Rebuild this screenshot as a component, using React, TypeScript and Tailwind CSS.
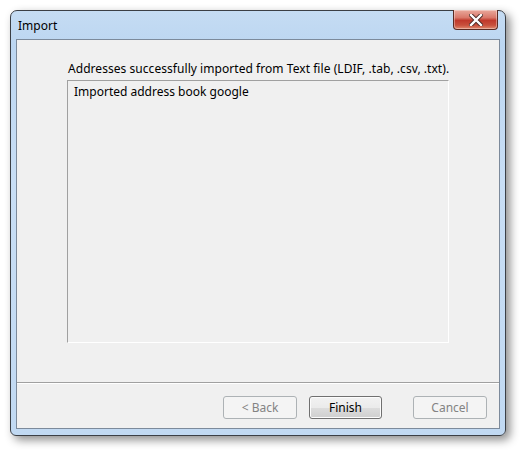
import React from "react";

const font = { fontFamily: '"Segoe UI", "Noto Sans", "Open Sans", Arial, sans-serif' };

function CloseButton() {
  return (
    <div className="absolute right-[7px] top-[-1px] w-[45px] h-[20px] rounded-b-[4px] border border-[#5a2a22] border-t-0 bg-[linear-gradient(to_bottom,#e9a99c_0%,#d9786a_40%,#c0392b_55%,#c8503c_80%,#e08a6e_100%)] flex items-center justify-center shadow-[inset_0_0_0_1px_rgba(255,255,255,0.35)]">
      <svg width="14" height="12" viewBox="0 0 14 12">
        <path d="M2 1 L12 11 M12 1 L2 11" stroke="#4a2a24" strokeWidth="4.2" strokeLinecap="square" />
        <path d="M2 1 L12 11 M12 1 L2 11" stroke="#ffffff" strokeWidth="2.4" strokeLinecap="square" />
      </svg>
    </div>
  );
}

function Btn({ label, primary }: { label: string; primary?: boolean }) {
  if (primary) {
    return (
      <div className="w-[73px] h-[23px] rounded-[3px] border border-[#707070] bg-[linear-gradient(to_bottom,#f2f2f2_0%,#ebebeb_50%,#dddddd_51%,#cfcfcf_100%)] shadow-[inset_0_0_0_1px_#fcfcfc] flex items-center justify-center text-[12px] text-black">
        {label}
      </div>
    );
  }
  return (
    <div className="w-[74px] h-[23px] rounded-[3px] border border-[#adb2b5] bg-[#f4f4f4] flex items-center justify-center text-[12px] text-[#838383]">
      {label}
    </div>
  );
}

export default function App() {
  return (
    <div className="w-[524px] h-[454px] bg-white overflow-hidden" style={font}>
      <div className="ml-[10px] mt-[10px] w-[496px] h-[426px] relative rounded-t-[7px] rounded-b-[6px] border border-[#3b3f45] bg-[linear-gradient(to_bottom,#c5dcf3_0%,#bcd6f1_8%,#c8def5_40%,#c1d9f2_100%)] shadow-[4px_4px_10px_rgba(0,0,0,0.45)] flex flex-col">
        <CloseButton />
        <div className="h-[28px] flex items-center pl-[7px] pt-[1px] text-[12px] text-black">Import</div>
        <div className="mx-[5px] mb-[6px] flex-1 border border-[#7c8a9b] bg-[#f0f0f0] flex flex-col">
          <div className="pl-[51px] pt-[21px] text-[12px] leading-[16px] text-black tracking-[0.05px]">
            Addresses successfully imported from Text file (LDIF, .tab, .csv, .txt).
          </div>
          <div className="ml-[50px] mt-[3px] w-[382px] h-[263px] border-l border-t border-[#a0a0a0] border-r-white border-b-white border-r border-b bg-[#f0f0f0] pl-[6px] pt-[3px] text-[12px] leading-[16px] text-black">
            Imported address book google
          </div>
          <div className="mt-[39px] h-[1px] bg-[#a0a0a0]" />
          <div className="h-[1px] bg-white" />
          <div className="mt-[12px] flex justify-end pr-[12px]">
            <Btn label="< Back" />
            <div className="ml-[12px]">
              <Btn label="Finish" primary />
            </div>
            <div className="ml-[31px]">
              <Btn label="Cancel" />
            </div>
          </div>
        </div>
      </div>
    </div>
  );
}
